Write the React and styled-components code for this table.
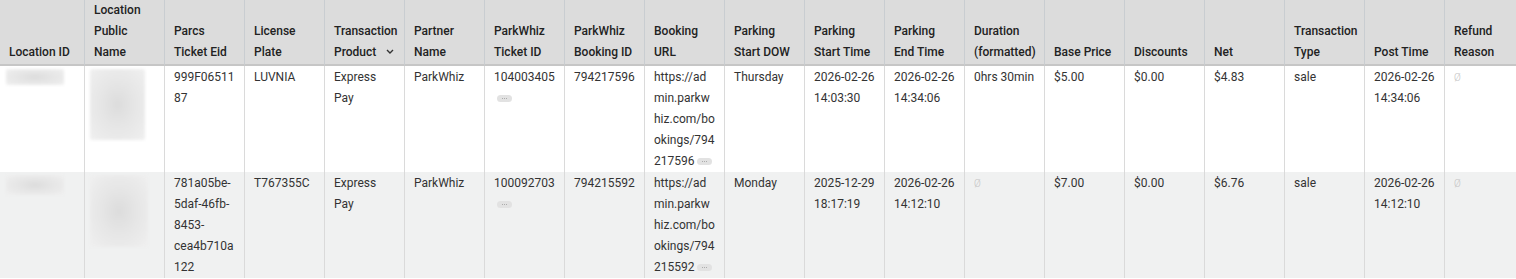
import React from "react";
import styled, { createGlobalStyle } from "styled-components";

const Global = createGlobalStyle`
  html, body { margin: 0; padding: 0; background: #ffffff; overflow: hidden; }
  body { font-family: Roboto, "Liberation Sans", Arial, sans-serif; }
`;

const Table = styled.div`
  width: 1516px;
  overflow: hidden;
  font-size: 12px;
  line-height: 21px;
  color: #333;
`;

const Grid = styled.div`
  display: grid;
  grid-template-columns: 85px repeat(18, 80px);
  width: max-content;
  background: ${(p) => p.$bg || "#ffffff"};
`;

const HeadCell = styled.div`
  display: flex;
  align-items: flex-end;
  box-sizing: border-box;
  padding: 0 8px 1px 9px;
  background: #dcdcdc;
  border-right: 1px solid #c9cdd1;
  border-bottom: 2px solid #c6c6c6;
  font-weight: 500;
  color: #222;
`;

const HeadText = styled.span`
  display: block;
`;

const Chevron = styled.svg`
  display: inline-block;
  margin-left: 10px;
  vertical-align: middle;
  position: relative;
  top: -1px;
`;

const Cell = styled.div`
  box-sizing: border-box;
  padding: 1px 8px 0 9px;
  border-right: 1px solid #dadada;
  min-width: 0;
  overflow-wrap: ${(p) => (p.$breakAll ? "normal" : "anywhere")};
  word-break: ${(p) => (p.$breakAll ? "break-all" : "normal")};
`;

const Blur = styled.div`
  width: ${(p) => p.$w}px;
  height: ${(p) => p.$h}px;
  margin: 2px 0 0 ${(p) => p.$ml}px;
  border-radius: 2px;
  background: radial-gradient(ellipse at 50% 50%, #dcdcdc 0%, #e6e6e6 45%, #ececec 80%, #f0f0f0 100%);
  filter: blur(1.5px);
`;

const Badge = styled.span`
  display: inline-flex;
  align-items: center;
  justify-content: center;
  width: 15px;
  height: 7px;
  margin-left: 3px;
  border-radius: 4px;
  background: #e2e2e2;
  vertical-align: middle;
  gap: 1px;
`;

const Dot = styled.i`
  display: block;
  width: 1px;
  height: 1px;
  border-radius: 50%;
  background: #9a9a9a;
`;

const Null = styled.span`
  color: #c4c4c4;
  font-family: Roboto, "Liberation Sans", sans-serif;
  font-weight: 300;
  font-size: 10px;
`;

const More = () => (
  <Badge>
    <Dot />
    <Dot />
    <Dot />
  </Badge>
);

const headers = [
  "Location ID",
  "Location Public Name",
  "Parcs Ticket Eid",
  "License Plate",
  "Transaction Product",
  "Partner Name",
  "ParkWhiz Ticket ID",
  "ParkWhiz Booking ID",
  "Booking URL",
  "Parking Start DOW",
  "Parking Start Time",
  "Parking End Time",
  "Duration (formatted)",
  "Base Price",
  "Discounts",
  "Net",
  "Transaction Type",
  "Post Time",
  "Refund Reason",
];

const rows = [
  {
    bg: "#ffffff",
    blurA: { w: 58, h: 16 },
    blurB: { w: 55, h: 71 },
    eid: "999F0651187",
    plate: "LUVNIA",
    ticket: "104003405",
    booking: "794217596",
    url: "https://admin.parkwhiz.com/bookings/794217596",
    dow: "Thursday",
    start: "2026-02-26 14:03:30",
    end: "2026-02-26 14:34:06",
    duration: "0hrs 30min",
    base: "$5.00",
    net: "$4.83",
    post: "2026-02-26 14:34:06",
  },
  {
    bg: "#f0f1f1",
    blurA: { w: 58, h: 20 },
    blurB: { w: 58, h: 72 },
    eid: "781a05be-5daf-46fb-8453-cea4b710a122",
    plate: "T767355C",
    ticket: "100092703",
    booking: "794215592",
    url: "https://admin.parkwhiz.com/bookings/794215592",
    dow: "Monday",
    start: "2025-12-29 18:17:19",
    end: "2026-02-26 14:12:10",
    duration: null,
    base: "$7.00",
    net: "$6.76",
    post: "2026-02-26 14:12:10",
  },
];

const Val = ({ v }) => (v == null ? <Null>Ø</Null> : v);

export default function App() {
  return (
    <>
      <Global />
      <Table>
        <Grid>
          {headers.map((h) => (
            <HeadCell key={h}>
              <HeadText>
                {h}
                {h === "Transaction Product" && (
                  <Chevron width="8" height="5" viewBox="0 0 8 5">
                    <path d="M1 1l3 3 3-3" fill="none" stroke="#333" strokeWidth="1.4" />
                  </Chevron>
                )}
              </HeadText>
            </HeadCell>
          ))}
        </Grid>
        {rows.map((r, i) => (
          <Grid key={i} $bg={r.bg}>
            <Cell>
              <Blur $w={r.blurA.w} $h={r.blurA.h} $ml={-3} />
            </Cell>
            <Cell>
              <Blur $w={r.blurB.w} $h={r.blurB.h} $ml={-4} />
            </Cell>
            <Cell>{r.eid}</Cell>
            <Cell>{r.plate}</Cell>
            <Cell>Express Pay</Cell>
            <Cell>ParkWhiz</Cell>
            <Cell>
              {r.ticket}
              <More />
            </Cell>
            <Cell>{r.booking}</Cell>
            <Cell $breakAll>
              {r.url}
              <More />
            </Cell>
            <Cell>{r.dow}</Cell>
            <Cell>{r.start}</Cell>
            <Cell>{r.end}</Cell>
            <Cell>
              <Val v={r.duration} />
            </Cell>
            <Cell>{r.base}</Cell>
            <Cell>$0.00</Cell>
            <Cell>{r.net}</Cell>
            <Cell>sale</Cell>
            <Cell>{r.post}</Cell>
            <Cell>
              <Val v={null} />
            </Cell>
          </Grid>
        ))}
      </Table>
    </>
  );
}
